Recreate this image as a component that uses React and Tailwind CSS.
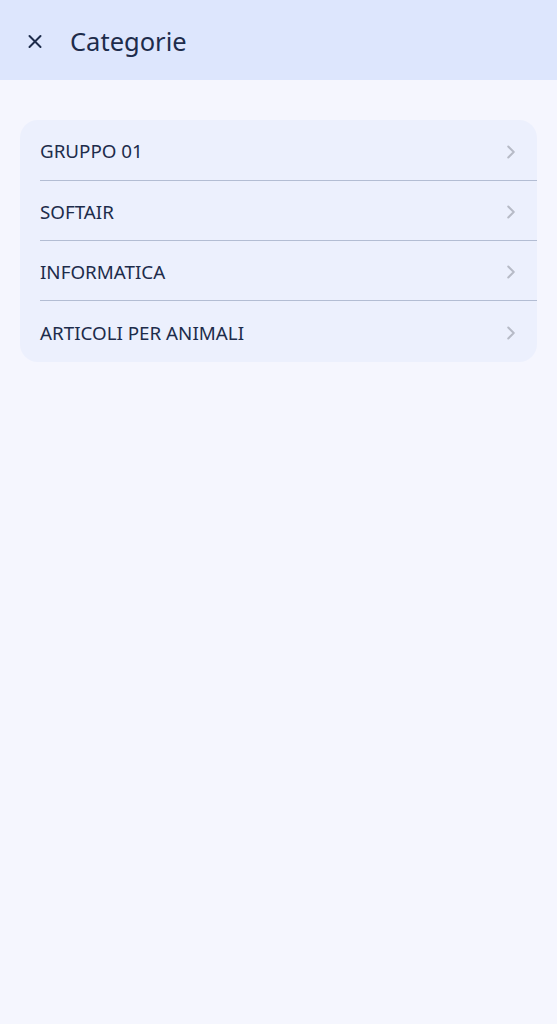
import { X, ChevronRight } from 'lucide-react';

const categories = ['GRUPPO 01', 'SOFTAIR', 'INFORMATICA', 'ARTICOLI PER ANIMALI'];

export default function App() {
  return (
    <div className="min-h-[1024px] bg-[#f5f6fe] font-['Noto_Sans',sans-serif] text-[#1d2c4b]">
      {/* Header */}
      <header className="flex h-[80px] items-center bg-[#dde6fd] px-[24px] pt-[3px]">
        <button className="flex h-[22px] w-[22px] items-center justify-center">
          <X className="h-[23px] w-[23px]" strokeWidth={2.2} />
        </button>
        <h1 className="ml-[24px] text-[25.5px] leading-none">Categorie</h1>
      </header>

      {/* List */}
      <div className="px-[20px] pt-[40px]">
        <div className="overflow-hidden rounded-[18px] bg-[#ecf0fd]">
          {categories.map((c, i) => (
            <div key={c} className="pl-[20px]">
              <div
                className={`flex items-center justify-between pr-[15px] pt-[3px] ${
                  i === 0 ? 'h-[61px] border-b border-[#b3bdd3]' : i < categories.length - 1 ? 'h-[60px] border-b border-[#b3bdd3]' : 'h-[61px]'
                }`}
              >
                <span className="text-[18.8px]">{c}</span>
                <ChevronRight className="h-[22px] w-[22px] text-[#b7bbc7]" strokeWidth={2.2} />
              </div>
            </div>
          ))}
        </div>
      </div>
    </div>
  );
}
